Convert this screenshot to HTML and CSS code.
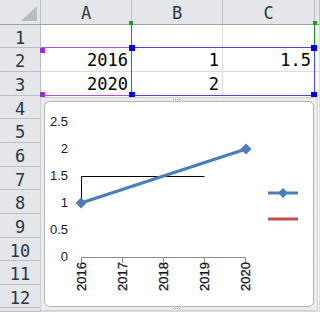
FILE: index.html
```html
<!DOCTYPE html>
<html>
<head>
<meta charset="utf-8">
<title>Sheet1</title>
<link rel="stylesheet" href="styles.css">
</head>
<body>
<div class="sheet">
  <div class="hd corner"><span class="tri"></span></div>
  <div class="hd col">A</div>
  <div class="hd col">B</div>
  <div class="hd col">C</div>
  <div class="hd col"></div>

  <div class="hd row">1</div><div></div><div></div><div></div><div></div>
  <div class="hd row">2</div><div>2016</div><div>1</div><div>1.5</div><div></div>
  <div class="hd row">3</div><div>2020</div><div>2</div><div></div><div></div>
  <div class="hd row">4</div><div></div><div></div><div></div><div></div>
  <div class="hd row">5</div><div></div><div></div><div></div><div></div>
  <div class="hd row">6</div><div></div><div></div><div></div><div></div>
  <div class="hd row">7</div><div></div><div></div><div></div><div></div>
  <div class="hd row">8</div><div></div><div></div><div></div><div></div>
  <div class="hd row">9</div><div></div><div></div><div></div><div></div>
  <div class="hd row">10</div><div></div><div></div><div></div><div></div>
  <div class="hd row">11</div><div></div><div></div><div></div><div></div>
  <div class="hd row">12</div><div></div><div></div><div></div><div></div>
  <div class="hd row"></div><div></div><div></div><div></div><div></div>
</div>

<!-- 参照範囲の枠 -->
<div class="rng green"><i class="h tl"></i><i class="h tr"></i></div>
<div class="rng purple"><i class="h tl"></i><i class="h bl"></i><i class="h br"></i></div>
<div class="rng blue"><i class="h tl"></i><i class="h tr"></i><i class="h bl"></i><i class="h br"></i></div>

<!-- グラフ -->
<svg class="chart" width="278" height="214" viewBox="0 0 278 214">
  <rect x="0.5" y="0.5" width="277" height="213" fill="#ececec" stroke="#d0d0d0"/>
  <rect x="4.5" y="4.5" width="269" height="205" rx="5" fill="#fff" stroke="#b4b4b4"/>
  <g fill="#9a9a9a">
    <rect x="133" y="2" width="1" height="1"/><rect x="135" y="2" width="1" height="1"/>
    <rect x="137" y="2" width="1" height="1"/><rect x="139" y="2" width="1" height="1"/>
    <rect x="133" y="211" width="1" height="1"/><rect x="135" y="211" width="1" height="1"/>
    <rect x="137" y="211" width="1" height="1"/><rect x="139" y="211" width="1" height="1"/>
  </g>

  <g class="ylab" text-anchor="end">
    <text x="28" y="29">2.5</text>
    <text x="28" y="56">2</text>
    <text x="28" y="83">1.5</text>
    <text x="28" y="110">1</text>
    <text x="28" y="137">0.5</text>
    <text x="28" y="164">0</text>
  </g>

  <g stroke="#8c8c8c" fill="none">
    <path d="M41 160.5H205.5M41.5 160v6M82.5 160v6M123.5 160v6M164.5 160v6M205.5 160v6"/>
  </g>

  <g class="xlab" text-anchor="end">
    <text transform="translate(46,165) rotate(-90)">2016</text>
    <text transform="translate(87,165) rotate(-90)">2017</text>
    <text transform="translate(128,165) rotate(-90)">2018</text>
    <text transform="translate(169,165) rotate(-90)">2019</text>
    <text transform="translate(210,165) rotate(-90)">2020</text>
  </g>

  <path d="M41.5 106V79.5H164.5" fill="none" stroke="#000"/>

  <path d="M41 106L206 52" stroke="#4a7ebb" stroke-width="3" fill="none"/>
  <g fill="#4a7ebb">
    <path d="M41 100.5l5.5 5.5-5.5 5.5-5.5-5.5z"/>
    <path d="M206 46.5l5.5 5.5-5.5 5.5-5.5-5.5z"/>
  </g>

  <path d="M228 96H258" stroke="#4a7ebb" stroke-width="3"/>
  <path d="M243 91l5 5-5 5-5-5z" fill="#4a7ebb"/>
  <path d="M228 122H258" stroke="#c0504d" stroke-width="3"/>
</svg>
</body>
</html>
```

FILE: styles.css
```css
*{ margin:0; padding:0; box-sizing:border-box;}
body{ width:320px; height:312px; overflow:hidden; background:#fff; position:relative; font-family:"DejaVu Sans Mono", monospace;}

.sheet{ display:grid; grid-template-columns:41px 91px 91px 92px 1fr;
  grid-template-rows:25px 23px 24px 24px 23px 24px 24px 23px 24px 24px 23px 24px 23px 1fr; height:312px;}
.sheet div{ border-right:1px solid #dadcdd; border-bottom:1px solid #dadcdd; display:flex; align-items:flex-end; justify-content:flex-end; padding:0 3px 2px 0; font-size:17px; line-height:18px; color:#000;}
.sheet .hd{ background:#e4e6e9; border-color:#bcc0c5; justify-content:center; align-items:center; padding:0; color:#27364a;}
.sheet .col{ border-bottom-color:#9ea3a9; padding-top:1px;}
.sheet .row{ padding-top:3px;}
.sheet .corner{ position:relative; border-bottom-color:#9ea3a9;}
.tri{ position:absolute; right:3px; bottom:3px; width:0; height:0; border-left:16px solid transparent; border-bottom:15px solid #b9bdc2;}

.rng{ position:absolute; border:1px solid;}
.rng .h{ position:absolute; width:5px; height:5px;}
.green{ left:131px; top:24px; width:184px; height:24px; border-color:#1c9a1c; border-top:0; border-bottom:0;}
.green .h{ background:#1c9a1c; width:4px; height:4px;}
.green .tl{ left:-2px; top:-1px;}
.green .tr{ right:-2px; top:-1px;}
.purple{ left:41px; top:47px; width:91px; height:49px; border-color:#b44fdc; border-left:0;}
.purple .h{ background:#a22ad0;}
.blue{ left:131px; top:47px; width:184px; height:49px; border-color:#4646ff;}
.blue .h{ background:#0000f0; width:6px; height:6px;}
.h.tl{ left:-3px; top:-3px;}
.h.tr{ right:-3px; top:-3px;}
.h.bl{ left:-3px; bottom:-3px;}
.h.br{ right:-3px; bottom:-3px;}
.purple .tl{ left:-1px; top:0;}
.purple .bl{ left:-1px; bottom:-2px;}

.chart{ position:absolute; left:40px; top:97px;}
.chart text{ font-family:"Liberation Sans", Arial, sans-serif; font-size:13px; fill:#141a2a;}
.chart .xlab text{ stroke:#141a2a; stroke-width:0.3;}
```
